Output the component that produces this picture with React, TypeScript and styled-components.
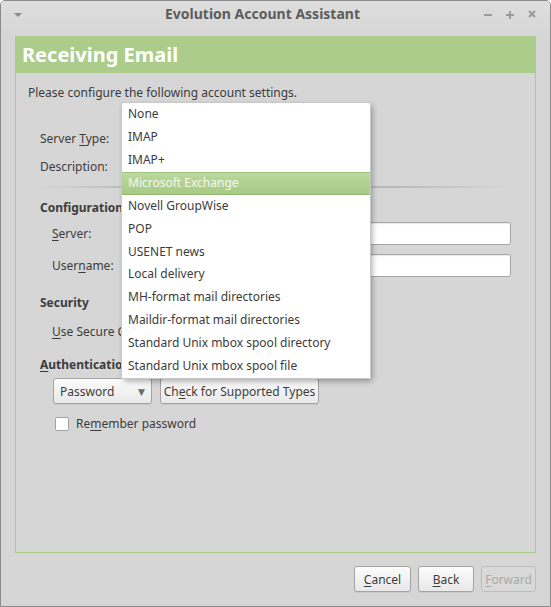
import React from "react";
import styled, { createGlobalStyle } from "styled-components";

const FONT = `"Noto Sans", "Open Sans", "DejaVu Sans", sans-serif`;

const GlobalStyle = createGlobalStyle`
  html, body { margin: 0; padding: 0; background: #ffffff; }
  body { font-family: ${FONT}; font-size: 12px; color: #3c3c3c; }
  * { box-sizing: border-box; }
`;

const Window = styled.div`
  position: relative;
  width: 551px;
  height: 607px;
  border: 1px solid #8a8a8a;
  border-radius: 5px 5px 0 0;
  background: #d6d6d6;
  display: flex;
  flex-direction: column;
  overflow: hidden;
`;

const TitleBar = styled.div`
  height: 34px;
  flex: none;
  display: flex;
  align-items: flex-start;
  padding: 4px 12px 0 12px;
  background: linear-gradient(#dedede, #d6d6d6);
`;

const TitleText = styled.div`
  flex: 1;
  text-align: center;
  font-weight: bold;
  font-size: 14px;
  color: #5c5c5c;
  line-height: 18px;
`;

const TitleControls = styled.div`
  display: flex;
  gap: 10px;
  align-items: center;
  height: 18px;
`;

const ControlIcon = styled.svg`
  display: block;
`;

const Content = styled.div`
  flex: 1;
  display: flex;
  flex-direction: column;
  padding: 1px 14px 0 14px;
`;

const Panel = styled.div`
  height: 517px;
  border: 1px solid #a9cc8a;
  display: flex;
  flex-direction: column;
`;

const PanelHeader = styled.div`
  height: 36px;
  background: #abcc8b;
  color: #ffffff;
  font-weight: bold;
  font-size: 20px;
  line-height: 36px;
  padding-left: 6px;
`;

const PanelBody = styled.div`
  padding: 12px 12px 0 12px;
  display: flex;
  flex-direction: column;
`;

const Intro = styled.div`
  line-height: 16px;
`;

const FormGrid = styled.div<{ $top: number; $gap?: number }>`
  display: grid;
  grid-template-columns: 108px 1fr;
  align-items: center;
  row-gap: ${(p) => p.$gap ?? 6}px;
  margin-top: ${(p) => p.$top}px;
  padding-left: 12px;
`;

const Label = styled.span<{ $indent?: number; $clip?: number }>`
  padding-left: ${(p) => p.$indent ?? 0}px;
  line-height: 22px;
  white-space: nowrap;
  overflow: hidden;
  max-width: ${(p) => (p.$clip ? `${p.$clip}px` : "none")};
`;

const SectionTitle = styled.div<{ $top: number; $clip?: number }>`
  margin-top: ${(p) => p.$top}px;
  margin-left: 12px;
  font-weight: bold;
  line-height: 16px;
  white-space: nowrap;
  overflow: hidden;
  max-width: ${(p) => (p.$clip ? `${p.$clip}px` : "none")};
`;

const Separator = styled.div`
  margin: 8px 12px 0 12px;
  height: 2px;
  background: linear-gradient(to right, rgba(180,180,180,0), #b8b8b8 20%, #b8b8b8 75%, rgba(180,180,180,0));
`;

const TextInput = styled.div`
  height: 23px;
  margin-right: 12px;
  background: #ffffff;
  border: 1px solid #a6a6a6;
  border-radius: 3px;
  box-shadow: inset 0 1px 1px rgba(0,0,0,0.08);
`;

const Row = styled.div<{ $top: number; $left: number }>`
  display: flex;
  align-items: center;
  gap: 8px;
  margin-top: ${(p) => p.$top}px;
  padding-left: ${(p) => p.$left}px;
`;

const Button = styled.div<{ $w: number; $disabled?: boolean }>`
  width: ${(p) => p.$w}px;
  height: 26px;
  display: flex;
  align-items: center;
  justify-content: center;
  border: 1px solid ${(p) => (p.$disabled ? "#bdbdbd" : "#a3a3a3")};
  border-radius: 3px;
  background: ${(p) => (p.$disabled ? "#d9d9d9" : "linear-gradient(#fbfbfb, #e9e9e9)")};
  color: ${(p) => (p.$disabled ? "#a9a9a9" : "#3c3c3c")};
  box-shadow: ${(p) => (p.$disabled ? "none" : "0 1px 0 rgba(0,0,0,0.06)")};
`;

const Combo = styled(Button)`
  justify-content: space-between;
  padding: 0 6px 0 6px;
`;

const Arrow = styled.span`
  font-size: 9px;
  color: #6a6a6a;
`;

const CheckRow = styled.div`
  display: flex;
  align-items: center;
  gap: 7px;
  margin-top: 11px;
  padding-left: 27px;
`;

const CheckBox = styled.div`
  width: 14px;
  height: 14px;
  background: #ffffff;
  border: 1px solid #a3a3a3;
  border-radius: 2px;
`;

const Footer = styled.div`
  display: flex;
  justify-content: flex-end;
  gap: 7px;
  padding: 13px 0 0 0;
`;

const U = styled.span`
  text-decoration: underline;
  text-underline-offset: 2px;
`;

const Popup = styled.div`
  position: absolute;
  left: 121px;
  top: 102px;
  width: 248px;
  height: 275px;
  background: #ffffff;
  box-shadow: 0 0 0 1px #c8c8c8, 2px 3px 6px rgba(0,0,0,0.35);
  display: flex;
  flex-direction: column;
`;

const MenuItem = styled.div<{ $active?: boolean }>`
  height: 23px;
  line-height: 20px;
  padding-left: 6px;
  color: ${(p) => (p.$active ? "#f4f8ef" : "#3c3c3c")};
  background: ${(p) => (p.$active ? "linear-gradient(#bad99d, #a7ca85)" : "transparent")};
  border-top: 1px solid ${(p) => (p.$active ? "#9fc47f" : "transparent")};
  border-bottom: 1px solid ${(p) => (p.$active ? "#95b975" : "transparent")};
`;

const items = [
  "None",
  "IMAP",
  "IMAP+",
  "Microsoft Exchange",
  "Novell GroupWise",
  "POP",
  "USENET news",
  "Local delivery",
  "MH-format mail directories",
  "Maildir-format mail directories",
  "Standard Unix mbox spool directory",
  "Standard Unix mbox spool file",
];

export default function App() {
  return (
    <>
      <GlobalStyle />
      <Window>
        <TitleBar>
          <ControlIcon width="30" height="18" viewBox="0 0 30 18">
            <path d="M1 8 L9 8 L5 12 Z" fill="#8a8a8a" />
          </ControlIcon>
          <TitleText>Evolution Account Assistant</TitleText>
          <TitleControls>
            <ControlIcon width="12" height="12" viewBox="0 0 12 12">
              <rect x="2" y="6" width="8" height="2" fill="#9a9a9a" />
            </ControlIcon>
            <ControlIcon width="12" height="12" viewBox="0 0 12 12">
              <rect x="2" y="6" width="8" height="2" fill="#9a9a9a" />
              <rect x="5" y="3" width="2" height="8" fill="#9a9a9a" />
            </ControlIcon>
            <ControlIcon width="12" height="12" viewBox="0 0 12 12">
              <path d="M3 3 L9 9 M9 3 L3 9" stroke="#9a9a9a" strokeWidth="2" />
            </ControlIcon>
          </TitleControls>
        </TitleBar>
        <Content>
          <Panel>
            <PanelHeader>Receiving Email</PanelHeader>
            <PanelBody>
              <Intro>Please configure the following account settings.</Intro>
              <FormGrid $top={27}>
                <Label>
                  Server <U>T</U>ype:
                </Label>
                <span />
                <Label>Description:</Label>
                <span />
              </FormGrid>
              <Separator />
              <SectionTitle $top={12}>Configuration</SectionTitle>
              <FormGrid $top={6} $gap={9}>
                <Label $indent={12}>
                  <U>S</U>erver:
                </Label>
                <TextInput />
                <Label $indent={12}>
                  User<U>n</U>ame:
                </Label>
                <TextInput />
              </FormGrid>
              <SectionTitle $top={18}>Security</SectionTitle>
              <FormGrid $top={10}>
                <Label $indent={12} $clip={81}>
                  <U>U</U>se Secure Connection:
                </Label>
                <span />
              </FormGrid>
              <SectionTitle $top={14} $clip={81}>
                <U>A</U>uthentication Type
              </SectionTitle>
              <Row $top={5} $left={25}>
                <Combo $w={99}>
                  <span>Password</span>
                  <Arrow>▼</Arrow>
                </Combo>
                <Button $w={159}>
                  <span>
                    Ch<U>e</U>ck for Supported Types
                  </span>
                </Button>
              </Row>
              <CheckRow>
                <CheckBox />
                <span>
                  Re<U>m</U>ember password
                </span>
              </CheckRow>
            </PanelBody>
          </Panel>
          <Footer>
            <Button $w={57}>
              <span>
                <U>C</U>ancel
              </span>
            </Button>
            <Button $w={56}>
              <span>
                <U>B</U>ack
              </span>
            </Button>
            <Button $w={55} $disabled>
              <span>
                <U>F</U>orward
              </span>
            </Button>
          </Footer>
        </Content>
        <Popup>
          {items.map((it, i) => (
            <MenuItem key={it} $active={i === 3}>
              {it}
            </MenuItem>
          ))}
        </Popup>
      </Window>
    </>
  );
}
